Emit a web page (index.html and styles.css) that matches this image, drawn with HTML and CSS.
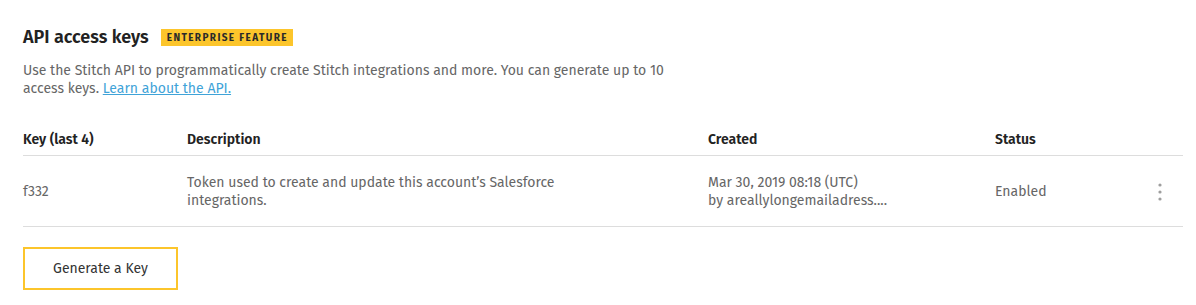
FILE: index.html
```html
<!DOCTYPE html>
<html lang="en">
  <head>
    <meta charset="UTF-8" />
    <meta name="viewport" content="width=device-width, initial-scale=1.0" />
    <title>API access keys</title>
    <link rel="stylesheet" href="styles.css">
  </head>
  <body>
    <div class="section">
      <div class="title-row">
        <h2>API access keys</h2>
        <span class="badge">Enterprise feature</span>
      </div>
      <p class="intro">
        Use the Stitch API to programmatically create Stitch integrations and
        more. You can generate up to 10 access keys.
        <a href="#">Learn about the API.</a>
      </p>

      <table class="keys">
        <thead>
          <tr>
            <th class="col-key">Key (last 4)</th>
            <th class="col-desc">Description</th>
            <th class="col-created">Created</th>
            <th class="col-status">Status</th>
            <th class="col-menu"></th>
          </tr>
        </thead>
        <tbody>
          <tr>
            <td>f332</td>
            <td>
              Token used to create and update this account’s Salesforce
              integrations.
            </td>
            <td>
              Mar 30, 2019 08:18 (UTC)<br />
              by areallylongemailadress....
            </td>
            <td>Enabled</td>
            <td class="menu">
              <svg width="6" height="20" viewBox="0 0 6 20">
                <circle cx="3" cy="3" r="1.6" fill="#9e9e9e" />
                <circle cx="3" cy="10" r="1.6" fill="#9e9e9e" />
                <circle cx="3" cy="17" r="1.6" fill="#9e9e9e" />
              </svg>
            </td>
          </tr>
        </tbody>
      </table>

      <button class="btn-outline">Generate a Key</button>
    </div>
  </body>
</html>
```

FILE: styles.css
```css
body {
  margin: 0;
  font-family: 'Fira Sans', 'Open Sans', sans-serif;
  color: #666;
  background: white;
}
.section {
  width: 1160px;
  margin-left: 23px;
  padding-top: 25px;
}
.title-row {
  display: flex;
  align-items: center;
  gap: 12px;
  height: 24px;
}
h2 {
  margin: 0;
  font-size: 18px;
  font-weight: 600;
  color: #222;
  line-height: 24px;
}
.badge {
  background-color: #fcc52b;
  color: #2a2a2a;
  font-size: 10px;
  font-weight: 700;
  letter-spacing: 1.4px;
  text-transform: uppercase;
  padding: 3px 5px 2px 6px;
  line-height: 12px;
}
.intro {
  margin: 13px 0 0;
  max-width: 660px;
  font-size: 14px;
  line-height: 18px;
}
.intro a {
  color: #3fa3d8;
}
.keys {
  width: 100%;
  margin-top: 18px;
  border-collapse: collapse;
  font-size: 14px;
  line-height: 18px;
}
.keys th {
  text-align: left;
  font-weight: 600;
  color: #222;
  padding: 15px 0 6px;
  border-bottom: 1px solid #ddd;
}
.keys td {
  padding: 18px 0 16px;
  border-bottom: 1px solid #ddd;
  vertical-align: middle;
}
.col-key {
  width: 164px;
}
.col-desc {
  width: 521px;
}
.col-created {
  width: 287px;
}
.keys td:nth-child(2) {
  padding-right: 150px;
}
.menu {
  text-align: right;
  padding-right: 20px !important;
}
.menu svg {
  display: inline-block;
  vertical-align: middle;
}
.btn-outline {
  margin-top: 20px;
  width: 155px;
  height: 43px;
  background: white;
  border: 2px solid #fcc52b;
  color: #333;
  font-family: inherit;
  font-size: 14px;
  cursor: pointer;
}
```
